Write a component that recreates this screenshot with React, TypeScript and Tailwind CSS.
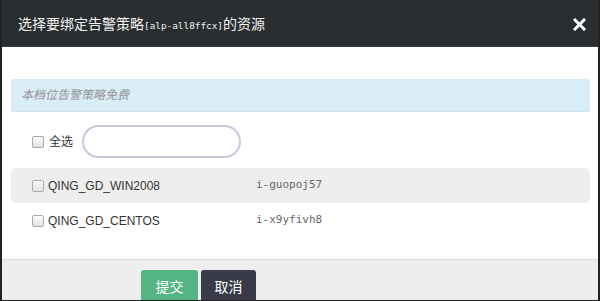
const cjk = "font-['Liberation_Sans','Noto_Sans_CJK_SC',sans-serif]";
const mono = "font-['DejaVu_Sans_Mono',monospace]";

const resources = [
  { name: "QING_GD_WIN2008", id: "i-guopoj57", striped: true },
  { name: "QING_GD_CENTOS", id: "i-x9yfivh8", striped: false },
];

function Checkbox() {
  return (
    <span className="inline-block w-[12px] h-[12px] rounded-[2px] border border-[#a9a9a9] bg-gradient-to-b from-[#fcfcfc] to-[#e2e2e2] shrink-0" />
  );
}

export default function App() {
  return (
    <div
      className={`w-[600px] h-[301px] overflow-hidden bg-white border-x-2 border-b border-[#222] flex flex-col ${cjk}`}
    >
      {/* Header */}
      <div className="h-[47px] shrink-0 bg-[#2a2e30] border-b border-[#3b3f41] flex items-center justify-between pl-[16px] pr-[12px] pt-[2px]">
        <h1 className="text-[14px] text-[#f2f2f2] flex items-baseline">
          选择要绑定告警策略
          <span className={`${mono} text-[9.4px]`}>[alp-all8ffcx]</span>
          的资源
        </h1>
        <svg width="13" height="13" viewBox="0 0 13 13">
          <path
            d="M2 2 L11 11 M11 2 L2 11"
            stroke="#ffffff"
            strokeWidth="3"
            strokeLinecap="square"
          />
        </svg>
      </div>

      {/* Body */}
      <div className="flex-1 pl-[9px] pr-[8px] pt-[32px]">
        <div className="h-[33px] bg-[#d9edf7] border-b border-[#cfe6f2] flex items-center pl-[10px]">
          <span className="text-[12px] italic text-[#939393]">本档位告警策略免费</span>
        </div>

        <div className="flex items-center mt-[13px] pl-[21px] h-[33px]">
          <Checkbox />
          <span className="ml-[5px] text-[12px] text-[#333]">全选</span>
          <input
            type="text"
            className="ml-[9px] w-[159px] h-[33px] rounded-full border-2 border-[#cbc8dd] outline-none px-3 text-[12px]"
          />
        </div>

        <div className="mt-[10px]">
          {resources.map((r) => (
            <div
              key={r.id}
              className={`h-[35px] flex items-center pl-[21px] rounded-[5px] ${r.striped ? "bg-[#eeeeee]" : ""}`}
            >
              <Checkbox />
              <span className="ml-[4px] w-[208px] text-[12px] text-[#333]">{r.name}</span>
              <span className={`${mono} text-[11px] text-[#666]`}>{r.id}</span>
            </div>
          ))}
        </div>
      </div>

      {/* Footer */}
      <div className="h-[41px] shrink-0 bg-[#eeeeee] border-t border-[#dcdcdc] flex items-start pl-[139px] pt-[10px] gap-[3px]">
        <button className="w-[57px] h-[34px] rounded-[3px] bg-[#55b582] text-white text-[14px]">提交</button>
        <button className="w-[55px] h-[34px] rounded-[3px] bg-[#393c48] text-white text-[14px]">取消</button>
      </div>
    </div>
  );
}
